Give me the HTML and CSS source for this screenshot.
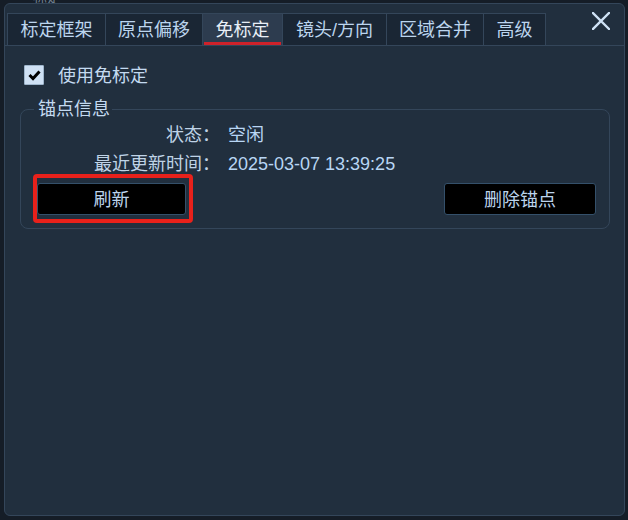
FILE: index.html
```html
<!DOCTYPE html>
<html lang="zh-CN">
<head>
<meta charset="utf-8">
<title>免标定</title>
<link rel="stylesheet" href="styles.css">
</head>
<body>
<div class="ghost">标定</div>
<div class="panel">
  <div class="tabs">
    <div class="tab w1">标定框架</div>
    <div class="tab w2">原点偏移</div>
    <div class="tab w3 active">免标定</div>
    <div class="tab w4">镜头/方向</div>
    <div class="tab w5">区域合并</div>
    <div class="tab w6">高级</div>
  </div>
  <div class="close" aria-label="关闭">
    <svg width="18" height="18" viewBox="0 0 18 18"><path d="M1 1 L17 17 M17 1 L1 17" stroke="#cfe2f5" stroke-width="2.4" fill="none" stroke-linecap="square"/></svg>
  </div>
  <label class="check-row">
    <span class="checkbox"><svg width="20" height="20" viewBox="0 0 20 20"><path d="M5.5 10 L9 13.5 L15.5 6.5" stroke="#000" stroke-width="3" fill="none"/></svg></span>
    <span class="check-label">使用免标定</span>
  </label>
  <fieldset class="group">
    <legend>锚点信息</legend>
    <div class="group-body">
      <div class="info">
        <div class="lbl">状态：</div><div class="val">空闲</div>
        <div class="lbl">最近更新时间：</div><div class="val num">2025-03-07 13:39:25</div>
      </div>
      <div class="actions">
        <div class="hl-wrap">
          <button class="btn b1">刷新</button>
          <span class="highlight"></span>
        </div>
        <button class="btn b2">删除锚点</button>
      </div>
    </div>
  </fieldset>
</div>
</body>
</html>
```

FILE: styles.css
```css
html, body {
  margin: 0;
  padding: 0;
}
body {
  width: 628px;
  height: 520px;
  overflow: hidden;
  background: #151d27;
  font-family: "Liberation Sans", "Noto Sans CJK SC", sans-serif;
  font-size: 18px;
  color: #c2d8ee;
  position: relative;
}
.ghost {
  position: absolute;
  left: 33px;
  top: -11px;
  font-size: 14px;
  color: #6d7c8c;
  line-height: 16px;
}
.panel {
  position: relative;
  z-index: 1;
  margin: 3px 3px 0 4px;
  height: 513px;
  box-sizing: border-box;
  border: 1px solid #34465a;
  border-radius: 6px;
  background: #212f3e;
  padding-top: 9px;
}
.tabs {
  display: flex;
  padding-left: 2px;
  border-bottom: 1px solid #34465a;
  height: 32px;
}
.tab {
  position: relative;
  box-sizing: border-box;
  height: 32px;
  border: 1px solid #34465a;
  border-bottom: none;
  background: #1a2634;
  color: #bcd5ee;
  display: flex;
  align-items: center;
  justify-content: center;
  line-height: 20px;
  padding-top: 1px;
}
.tab + .tab { margin-left: -1px; }
.w1 { width: 99px; }
.w2 { width: 98px; }
.w3 { width: 81px; }
.w4 { width: 105px; }
.w5 { width: 98px; }
.w6 { width: 63px; }
.tab.active {
  background: #2d3c4f;
  color: #e8eff7;
  z-index: 1;
}
.tab.active::after {
  content: "";
  position: absolute;
  left: 1px;
  right: 1px;
  bottom: 0;
  height: 3px;
  background: #cf222a;
}
.close {
  position: absolute;
  left: 587px;
  top: 8px;
  width: 18px;
  height: 18px;
}
.close svg { display: block; }
.check-row {
  display: flex;
  align-items: center;
  margin-top: 18px;
  padding-left: 19px;
  height: 21px;
}
.checkbox {
  width: 20px;
  height: 20px;
  box-sizing: border-box;
  background: #cfe1f4;
  border: 1px solid #9fb6cc;
  border-radius: 1px;
}
.checkbox svg { display: block; margin: -1px; }
.check-label {
  margin-left: 14px;
  line-height: 20px;
  padding-top: 2px;
  color: #c4daf0;
}
.group {
  margin: 15px 14px 0 15px;
  padding: 0;
  border: 1px solid #34465a;
  border-radius: 8px;
  min-inline-size: 0;
}
.group legend {
  margin-left: 13px;
  padding: 0 2px 0 4px;
  line-height: 18px;
  color: #c4daf0;
}
.group-body {
  padding: 3px 13px 13px 16px;
}
.info {
  display: grid;
  grid-template-columns: 183px auto;
  column-gap: 8px;
  line-height: 29px;
}
.lbl {
  text-align: right;
  color: #bfd3e6;
}
.val { color: #b8d6f4; }
.actions {
  display: flex;
  justify-content: space-between;
  margin-top: 4px;
}
.hl-wrap {
  position: relative;
  display: flex;
}
.btn {
  height: 32px;
  box-sizing: border-box;
  background: #000;
  border: 1px solid #34506a;
  border-radius: 3px;
  color: #bcd4ec;
  font-family: "Liberation Sans", "Noto Sans CJK SC", sans-serif;
  font-size: 18px;
  line-height: 20px;
  padding: 1px 0 0;
}
.b1 { width: 149px; }
.b2 { width: 152px; }
.highlight {
  position: absolute;
  left: -4px;
  right: -7px;
  top: -9px;
  bottom: -8px;
  border: 4px solid #e8211b;
  border-radius: 4px;
  pointer-events: none;
}
```
